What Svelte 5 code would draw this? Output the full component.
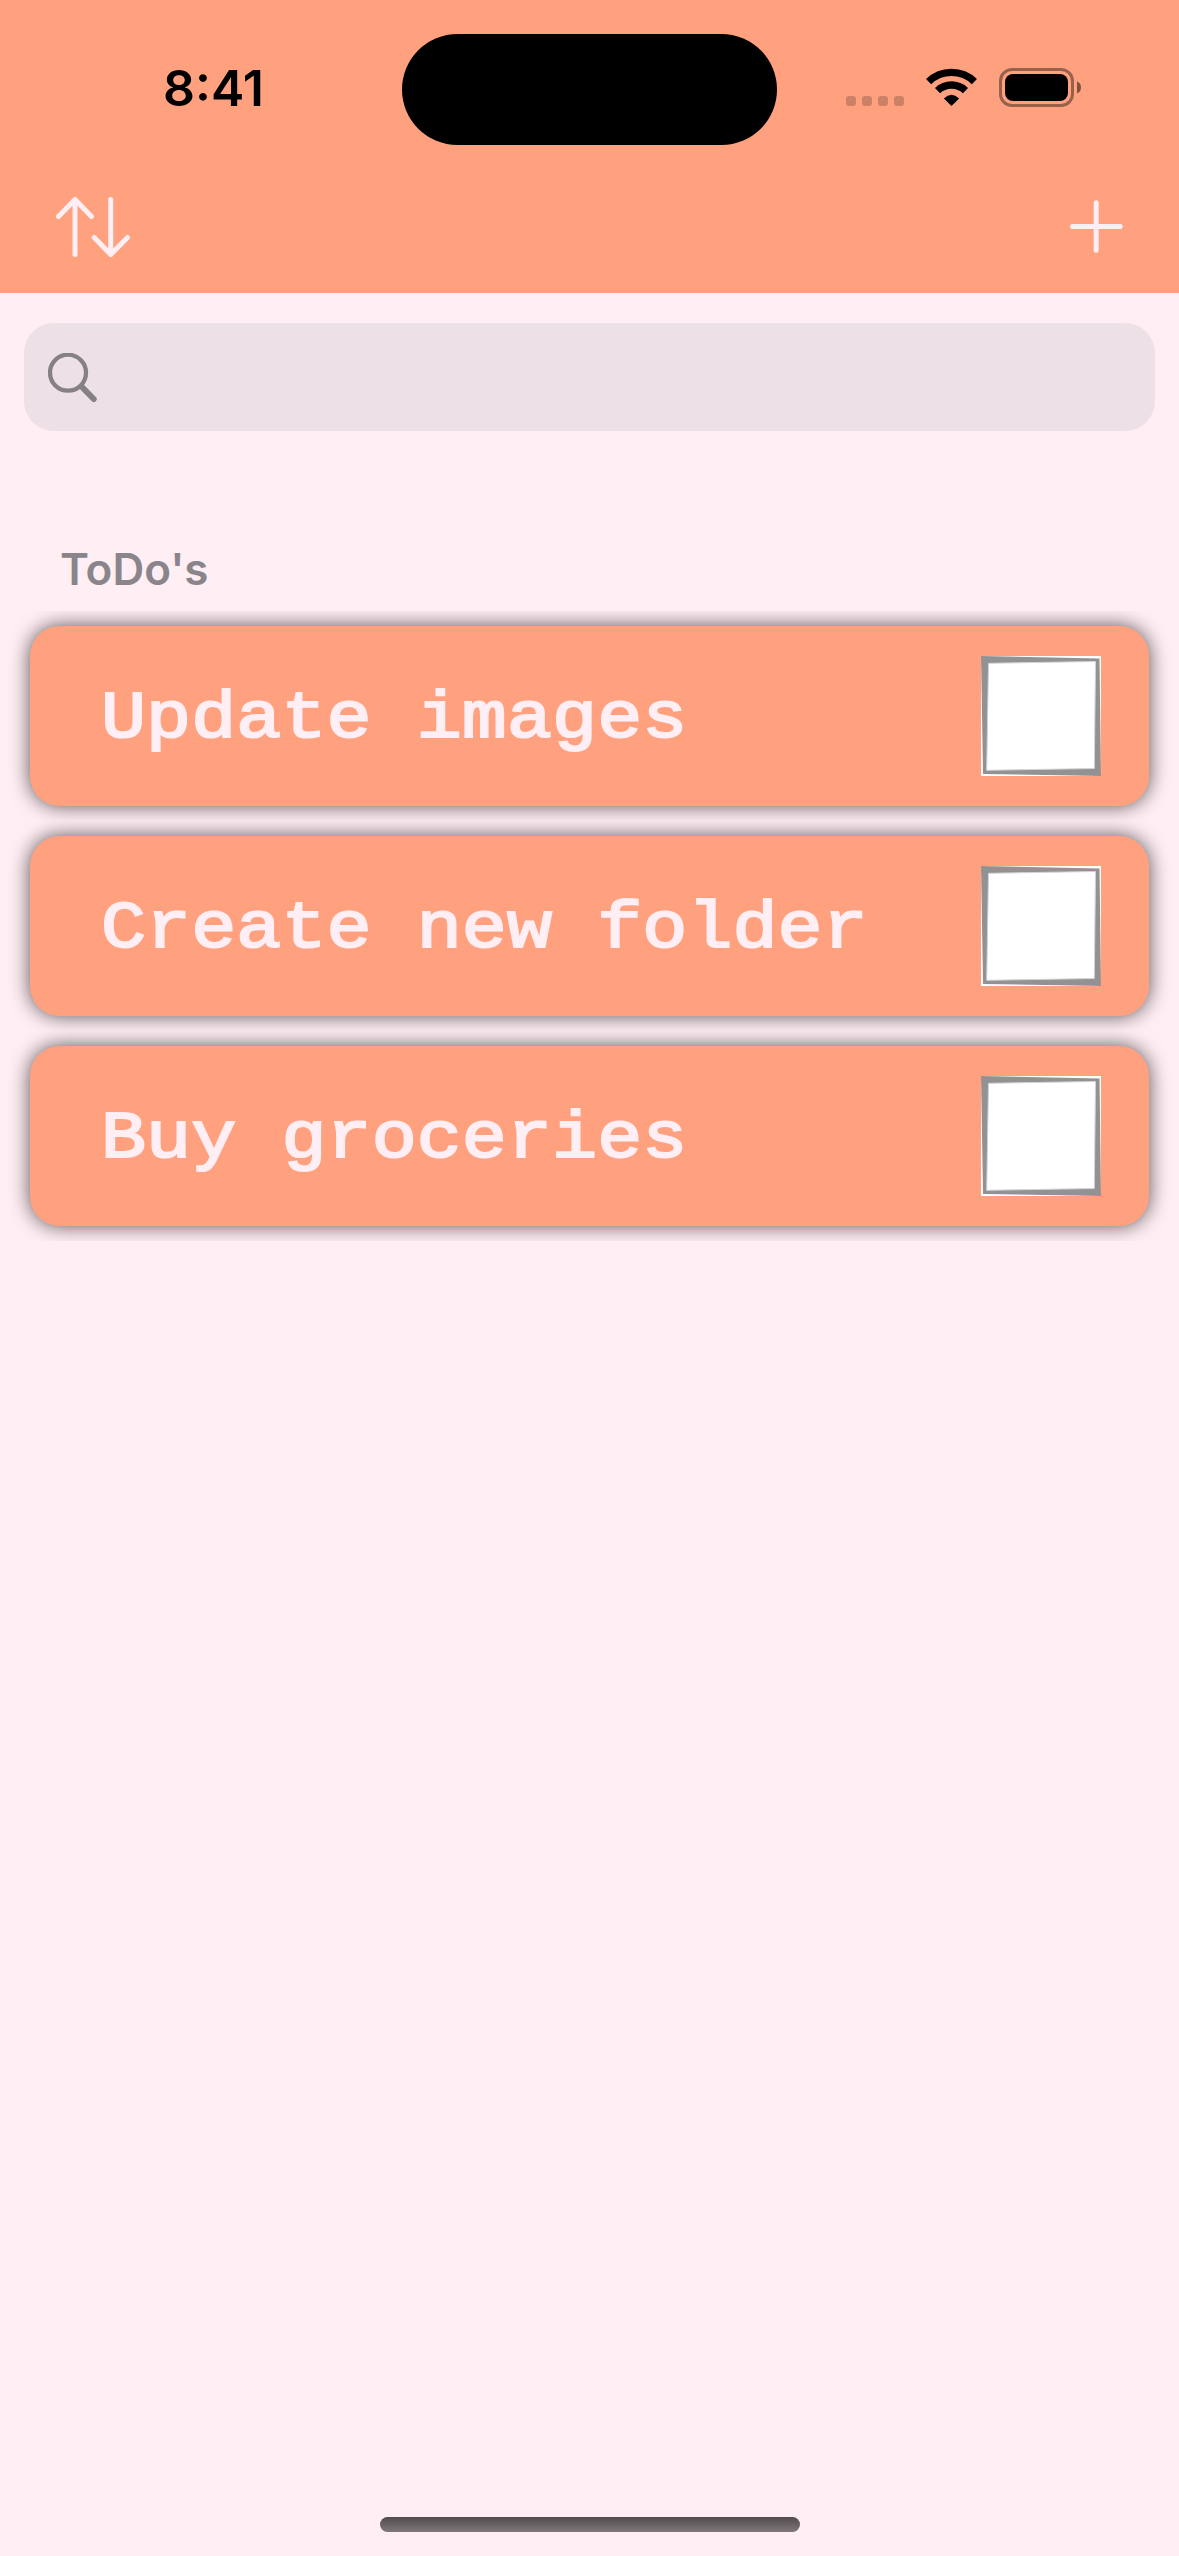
<script>
  const todos = ['Update images', 'Create new folder', 'Buy groceries'];
</script>

<div class="screen">
  <header>
    <div class="status">
      <div class="time">8:41</div>
      <div class="island"></div>
      <div class="indicators">
        <svg class="cell-dots" width="58" height="10" viewBox="0 0 58 10" fill="#000" fill-opacity=".2">
          <rect width="10" height="10" rx="3" />
          <rect x="16" width="10" height="10" rx="3" />
          <rect x="32" width="10" height="10" rx="3" />
          <rect x="48" width="10" height="10" rx="3" />
        </svg>
        <svg class="wifi" width="51" height="38" viewBox="0 0 51 38">
          <g fill="none" stroke="#000" stroke-width="7.4">
            <path d="M2.6 13.6A33 33 0 0 1 48.4 13.6" />
            <path d="M11.5 22.6A20.5 20.5 0 0 1 39.5 22.6" />
          </g>
          <path d="M25.5 38L17.9 30.4Q25.5 23.2 33.1 30.4Z" />
        </svg>
        <svg class="battery" width="83" height="39" viewBox="0 0 83 39">
          <rect x="1.5" y="1.5" width="72" height="36" rx="11.5" fill="none" stroke="#000" stroke-opacity=".4" stroke-width="3" />
          <rect x="6" y="6" width="63" height="27" rx="8" />
          <path d="M78 13.2Q82 15.200 82 19.500T78 25.500Z" fill-opacity=".5" />
        </svg>
      </div>
    </div>
    <nav>
      <svg width="75" height="62" viewBox="0 0 75 62" fill="none" stroke="#ffeef3" stroke-width="5" stroke-linecap="round" stroke-linejoin="round">
        <path d="M19 58.500V3.500M2.500 20.500L19 3.500L35.500 20.500" />
        <path d="M54.700 3.500V58.500M38.200 41.500L54.700 58.500L71.500 41.500" />
      </svg>
      <svg width="53" height="54" viewBox="0 0 53 54" fill="none" stroke="#ffeef3" stroke-width="5" stroke-linecap="round">
        <path d="M26.200 2.700V50.300M2.500 26.500H50.200" />
      </svg>
    </nav>
  </header>

  <div class="search">
    <svg width="50" height="50" viewBox="0 0 50 50" fill="none" stroke="#858085" stroke-linecap="round">
      <circle cx="20" cy="19.700" r="18" stroke-width="4.300" />
      <path d="M34 34L45.700 46" stroke-width="6" />
    </svg>
  </div>

  <h2>ToDo's</h2>

  <ul>
    {#each todos as todo}
      <li>
        <div class="card">
          <span>{todo}</span>
          <svg width="120" height="120" viewBox="0 0 120 120">
            <rect width="120" height="120" fill="#fff" />
            <path d="M0 0L118.500 2.500L120 120L2 118Z" fill="#929292" />
            <path d="M7.500 7.300L114.500 5.500L113.300 112.500L5.700 114.300Z" fill="#fff" stroke="#d4d4d4" stroke-width="1" />
          </svg>
        </div>
      </li>
    {/each}
  </ul>

  <div class="home"></div>
</div>

<style>
  :global(body) {
    background: #ffeef3;
  }
  .screen {
    width: 1179px;
    height: 2556px;
    box-sizing: border-box;
    padding-bottom: 24px;
    display: flex;
    flex-direction: column;
    background: #ffeef3;
    font-family: Inter, 'Liberation Sans', sans-serif;
    overflow: hidden;
  }
  svg {
    display: block;
    flex: none;
  }
  header {
    height: 293px;
    flex: none;
    background: #ffa17f;
  }
  .status {
    height: 177px;
    display: grid;
    grid-template-columns: 402px 375px 402px;
    align-items: center;
  }
  .time {
    padding: 0 0 2px 163px;
    font-size: 50px;
    font-weight: 600;
    line-height: 60px;
    color: #000;
  }
  .island {
    height: 111px;
    margin-top: 1px;
    border-radius: 56px;
    background: #000;
  }
  .indicators {
    display: flex;
    align-items: flex-end;
    padding: 0 0 2px 69px;
  }
  .cell-dots {
    margin-bottom: 1px;
  }
  .wifi {
    margin: 0 22px 1px;
  }
  nav {
    display: flex;
    justify-content: space-between;
    align-items: center;
    height: 100px;
    padding: 0 56px;
  }
  .search {
    flex: none;
    box-sizing: border-box;
    height: 108px;
    margin: 30px 24px 0;
    padding: 30px 24px;
    border-radius: 30px;
    background: #ede0e6;
  }
  h2 {
    margin: 113px 0 0 60px;
    height: 67px;
    font-size: 44px;
    line-height: 50px;
    font-weight: 600;
    color: #8a858a;
  }
  ul {
    list-style: none;
    margin: 0;
    padding: 0;
  }
  li {
    height: 210px;
    box-sizing: border-box;
    padding: 15px 30px;
    overflow: hidden;
  }
  .card {
    height: 180px;
    box-sizing: border-box;
    padding: 0 48px 0 71px;
    display: flex;
    align-items: center;
    justify-content: space-between;
    border-radius: 30px;
    background: #ffa17f;
    box-shadow: 0 0 20px rgba(0, 0, 0, 0.66);
  }
  .card span {
    padding-top: 7px;
    font: 400 75px/90px 'Courier New', 'Liberation Mono', monospace;
    letter-spacing: 0.1px;
    color: #ffeef3;
    -webkit-text-stroke: 2.4px #ffeef3;
    white-space: nowrap;
    transform: scaleY(0.9);
  }
  .home {
    width: 420px;
    height: 15px;
    margin: auto auto 0;
    border-radius: 8px;
    background: linear-gradient(#504c4e, #80777b);
  }
</style>
